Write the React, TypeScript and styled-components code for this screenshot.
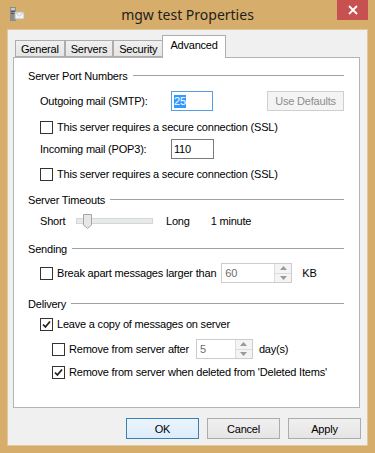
import styled, { createGlobalStyle } from "styled-components";

const GlobalStyle = createGlobalStyle`
  html, body {
    margin: 0;
    padding: 0;
    background: #d6ad6a;
  }
  * {
    box-sizing: border-box;
  }
`;

const Window = styled.div`
  width: 375px;
  height: 453px;
  background: #d6ad6a;
  display: flex;
  flex-direction: column;
  padding: 0 7px 7px 7px;
  font-family: "Liberation Sans", Arial, sans-serif;
  font-size: 11px;
  letter-spacing: -0.2px;
  color: #000;
`;

const TitleBar = styled.div`
  height: 29px;
  display: grid;
  grid-template-columns: 1fr auto 1fr;
  align-items: start;
`;

const TitleIcon = styled.div`
  margin: 6px 0 0 1px;
  width: 17px;
  height: 17px;
`;

const TitleText = styled.div`
  font-family: "Noto Sans", "Open Sans", sans-serif;
  font-size: 14px;
  letter-spacing: 0;
  line-height: 29px;
  color: #1e1e1e;
`;

const CloseButton = styled.div`
  justify-self: end;
  width: 31px;
  height: 20px;
  background: #c75050;
  display: flex;
  align-items: center;
  justify-content: center;
`;

const Client = styled.div`
  flex: 1;
  background: #f0f0f0;
  border: 1px solid #e2c898;
  display: flex;
  flex-direction: column;
  padding: 5px 7px 0 5px;
`;

const TabStrip = styled.div`
  height: 22px;
  display: flex;
  align-items: flex-end;
  padding-left: 2px;
  position: relative;
  z-index: 1;
`;

const Tab = styled.div<{ $active?: boolean }>`
  height: ${(p) => (p.$active ? 23 : 17)}px;
  padding: 0 ${(p) => (p.$active ? 7 : 5)}px;
  margin-bottom: ${(p) => (p.$active ? -1 : 0)}px;
  margin-left: ${(p) => (p.$active ? -1 : 0)}px;
  border: 1px solid #adadad;
  border-bottom: ${(p) => (p.$active ? "none" : "1px solid #adadad")};
  border-left: ${(p) => (p.$active ? "1px solid #adadad" : "1px solid #adadad")};
  background: ${(p) => (p.$active ? "#fff" : "linear-gradient(#f0f0f0, #e5e5e5)")};
  display: flex;
  align-items: center;
  padding-top: ${(p) => (p.$active ? 0 : 1)}px;
  padding-bottom: ${(p) => (p.$active ? 4 : 0)}px;
  & + & {
    border-left: ${(p) => (p.$active ? "1px solid #adadad" : "none")};
  }
`;

const Panel = styled.div`
  height: 351px;
  background: #fff;
  border: 1px solid #b4b4b4;
  padding: 0 15px 0 14px;
  display: flex;
  flex-direction: column;
`;

const GroupHeader = styled.div<{ $top: number }>`
  margin-top: ${(p) => p.$top}px;
  height: 14px;
  display: flex;
  align-items: center;
  gap: 5px;
  &::after {
    content: "";
    flex: 1;
    height: 1px;
    background: #a0a0a0;
    margin-top: -1px;
  }
`;

const Row = styled.div<{ $top: number; $indent?: number; $h?: number }>`
  margin-top: ${(p) => p.$top}px;
  margin-left: ${(p) => p.$indent ?? 12}px;
  height: ${(p) => p.$h ?? 20}px;
  display: flex;
  align-items: center;
  white-space: nowrap;
`;

const FieldLabel = styled.span<{ $w: number }>`
  width: ${(p) => p.$w}px;
  flex: none;
`;

const TextBox = styled.div<{ $focus?: boolean }>`
  width: 43px;
  height: 20px;
  border: 1px solid ${(p) => (p.$focus ? "#569de5" : "#7a7a7a")};
  background: #fff;
  padding: 0 2px;
  display: flex;
  align-items: center;
`;

const Selected = styled.span`
  background: #3399ff;
  color: #fff;
  line-height: 13px;
`;

const DisabledButton = styled.div`
  margin-left: 54px;
  width: 79px;
  height: 20px;
  border: 1px solid #cfcfcf;
  background: #f4f4f4;
  color: #8d8d8d;
  display: flex;
  align-items: center;
  justify-content: center;
`;

const Box = styled.div`
  width: 13px;
  height: 13px;
  border: 1px solid #333;
  background: #fff;
  flex: none;
  margin-right: 4px;
  display: flex;
  align-items: center;
  justify-content: center;
`;

const Spin = styled.div<{ $w: number; $gap: number }>`
  width: ${(p) => p.$w}px;
  height: 20px;
  margin-left: ${(p) => p.$gap}px;
  border: 1px solid #cccccc;
  background: #fff;
  display: flex;
  color: #6d6d6d;
`;

const SpinValue = styled.div`
  flex: 1;
  padding-left: 3px;
  display: flex;
  align-items: center;
`;

const SpinButtons = styled.div`
  width: 17px;
  border-left: 1px solid #dcdcdc;
  display: flex;
  flex-direction: column;
`;

const SpinHalf = styled.div`
  flex: 1;
  display: flex;
  align-items: center;
  justify-content: center;
  background: #f4f4f4;
  & + & {
    border-top: 1px solid #dcdcdc;
  }
`;

const Unit = styled.span<{ $gap: number }>`
  margin-left: ${(p) => p.$gap}px;
`;

const Track = styled.div`
  margin-left: 11px;
  width: 77px;
  height: 16px;
  display: flex;
  align-items: center;
  position: relative;
  &::before {
    content: "";
    flex: 1;
    height: 4px;
    background: #e7eaea;
    border: 1px solid #d6d6d6;
  }
`;

const Thumb = styled.svg`
  position: absolute;
  left: 7px;
  top: 1px;
`;

const Footer = styled.div`
  display: flex;
  justify-content: flex-end;
  gap: 8px;
  margin-top: 10px;
  margin-right: -1px;
`;

const DialogButton = styled.div<{ $default?: boolean }>`
  width: 73px;
  height: 21px;
  border: 1px solid ${(p) => (p.$default ? "#3c7fb1" : "#acacac")};
  background: ${(p) =>
    p.$default ? "linear-gradient(#ecf4fc, #dcecfc)" : "linear-gradient(#f0f0f0, #e5e5e5)"};
  display: flex;
  align-items: center;
  justify-content: center;
`;

function Check({ on }: { on?: boolean }) {
  return (
    <Box>
      {on && (
        <svg width="9" height="9" viewBox="0 0 9 9">
          <path d="M1 4.5 L3.4 7 L8 1.5" fill="none" stroke="#222" strokeWidth="1.8" />
        </svg>
      )}
    </Box>
  );
}

function Arrows() {
  return (
    <SpinButtons>
      <SpinHalf>
        <svg width="7" height="4" viewBox="0 0 7 4">
          <path d="M0 4 L3.5 0 L7 4 Z" fill="#9a9a9a" />
        </svg>
      </SpinHalf>
      <SpinHalf>
        <svg width="7" height="4" viewBox="0 0 7 4">
          <path d="M0 0 L3.5 4 L7 0 Z" fill="#9a9a9a" />
        </svg>
      </SpinHalf>
    </SpinButtons>
  );
}

export default function App() {
  return (
    <>
      <GlobalStyle />
      <Window>
        <TitleBar>
          <TitleIcon>
            <svg width="17" height="17" viewBox="0 0 17 17">
              <rect x="2" y="1" width="6" height="14" fill="#8c8c8c" />
              <rect x="3" y="2" width="4" height="2" fill="#c8c8c8" />
              <rect x="3" y="5" width="4" height="1" fill="#5a5a5a" />
              <rect x="3" y="7" width="4" height="1" fill="#5a5a5a" />
              <path d="M7 6 L16 6 L16 13 L7 13 Z" fill="#f4f4f4" stroke="#b8b8b8" />
              <path d="M7 6 L11.5 10 L16 6" fill="none" stroke="#c4c4c4" />
            </svg>
          </TitleIcon>
          <TitleText>mgw test Properties</TitleText>
          <CloseButton>
            <svg width="10" height="10" viewBox="0 0 10 10">
              <path d="M1 1 L9 9 M9 1 L1 9" stroke="#fff" strokeWidth="1.8" />
            </svg>
          </CloseButton>
        </TitleBar>
        <Client>
          <TabStrip>
            <Tab>General</Tab>
            <Tab>Servers</Tab>
            <Tab>Security</Tab>
            <Tab $active>Advanced</Tab>
          </TabStrip>
          <Panel>
            <GroupHeader $top={11}>Server Port Numbers</GroupHeader>
            <Row $top={8}>
              <FieldLabel $w={131}>Outgoing mail (SMTP):</FieldLabel>
              <TextBox $focus>
                <Selected>25</Selected>
              </TextBox>
              <DisabledButton>Use Defaults</DisabledButton>
            </Row>
            <Row $top={9} $h={14}>
              <Check />
              This server requires a secure connection (SSL)
            </Row>
            <Row $top={5}>
              <FieldLabel $w={131}>Incoming mail (POP3):</FieldLabel>
              <TextBox>110</TextBox>
            </Row>
            <Row $top={8} $h={14}>
              <Check />
              This server requires a secure connection (SSL)
            </Row>

            <GroupHeader $top={12}>Server Timeouts</GroupHeader>
            <Row $top={6} $h={16}>
              <FieldLabel $w={25}>Short</FieldLabel>
              <Track>
                <Thumb width="9" height="15" viewBox="0 0 9 15">
                  <path d="M0.5 0.5 H8.5 V11 L4.5 14.5 L0.5 11 Z" fill="#e6e6e6" stroke="#a6a6a6" />
                </Thumb>
              </Track>
              <Unit $gap={13}>Long</Unit>
              <Unit $gap={21}>1 minute</Unit>
            </Row>

            <GroupHeader $top={13}>Sending</GroupHeader>
            <Row $top={7}>
              <Check />
              Break apart messages larger than
              <Spin $w={71} $gap={5}>
                <SpinValue>60</SpinValue>
                <Arrows />
              </Spin>
              <Unit $gap={10}>KB</Unit>
            </Row>

            <GroupHeader $top={14}>Delivery</GroupHeader>
            <Row $top={6} $h={14}>
              <Check on />
              Leave a copy of messages on server
            </Row>
            <Row $top={8} $indent={24}>
              <Check />
              Remove from server after
              <Spin $w={57} $gap={7}>
                <SpinValue>5</SpinValue>
                <Arrows />
              </Spin>
              <Unit $gap={6}>day(s)</Unit>
            </Row>
            <Row $top={6} $indent={24} $h={14}>
              <Check on />
              Remove from server when deleted from 'Deleted Items'
            </Row>
          </Panel>
          <Footer>
            <DialogButton $default>OK</DialogButton>
            <DialogButton>Cancel</DialogButton>
            <DialogButton>Apply</DialogButton>
          </Footer>
        </Client>
      </Window>
    </>
  );
}
